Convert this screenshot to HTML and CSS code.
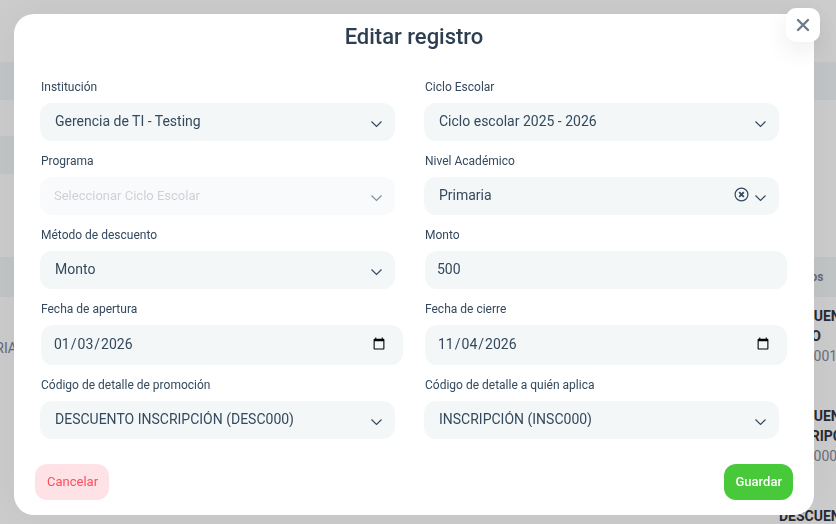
FILE: index.html
```html
<!doctype html>
<html lang="es">
<head>
    <meta charset="UTF-8">
    <meta name="viewport" content="width=device-width, initial-scale=1.0">
    <title>Editar registro</title>
    <link rel="stylesheet" href="styles.css">
</head>
<body>
    <main class="page" aria-hidden="true">
        <div class="filter filter-wide"></div>
        <div class="filter filter-short"></div>
        <div class="list">
            <div class="list-head">
                <span></span>
                <span class="list-title">Códigos</span>
            </div>
            <div class="list-row">
                <span class="level">PRIMARIA</span>
                <div class="code"><b>DESCUENTO</b><b>ÚNICO</b><span>DESC001</span></div>
            </div>
            <div class="list-row">
                <span></span>
                <div class="code"><b>DESCUENTO</b><b>INSCRIPCIÓN</b><span>DESC000</span></div>
            </div>
            <div class="list-row">
                <span></span>
                <div class="code"><b>DESCUENTO</b></div>
            </div>
        </div>
    </main>

    <div class="overlay">
        <div class="modal" role="dialog" aria-modal="true" aria-labelledby="modalTitle">
            <button type="button" class="close" aria-label="Cerrar">
                <svg width="14" height="14" viewBox="0 0 14 14"><path d="M2 2l10 10M12 2L2 12"/></svg>
            </button>
            <h1 id="modalTitle">Editar registro</h1>
            <form id="editForm">
                <div class="fields">
                    <div class="field">
                        <label for="institucion">Institución</label>
                        <div class="select">
                            <select id="institucion"><option>Gerencia de TI - Testing</option></select>
                            <svg class="arrow" width="12" height="8" viewBox="0 0 12 8"><path d="M.5 1.5l5 5 5-5"/></svg>
                        </div>
                    </div>
                    <div class="field">
                        <label for="ciclo">Ciclo Escolar</label>
                        <div class="select">
                            <select id="ciclo"><option>Ciclo escolar 2025 - 2026</option></select>
                            <svg class="arrow" width="12" height="8" viewBox="0 0 12 8"><path d="M.5 1.5l5 5 5-5"/></svg>
                        </div>
                    </div>
                    <div class="field">
                        <label for="programa">Programa</label>
                        <div class="select disabled">
                            <select id="programa" disabled><option>Seleccionar Ciclo Escolar</option></select>
                            <svg class="arrow" width="12" height="8" viewBox="0 0 12 8"><path d="M.5 1.5l5 5 5-5"/></svg>
                        </div>
                    </div>
                    <div class="field">
                        <label for="nivel">Nivel Académico</label>
                        <div class="select">
                            <select id="nivel"><option>Primaria</option></select>
                            <button type="button" class="clear" aria-label="Limpiar">
                                <svg width="16" height="16" viewBox="0 0 16 16"><circle cx="8.5" cy="7.5" r="6.4"/><path d="M6.2 5.2l4.6 4.6M10.8 5.2l-4.6 4.6"/></svg>
                            </button>
                            <svg class="arrow" width="12" height="8" viewBox="0 0 12 8"><path d="M.5 1.5l5 5 5-5"/></svg>
                        </div>
                    </div>
                    <div class="field">
                        <label for="metodo">Método de descuento</label>
                        <div class="select">
                            <select id="metodo"><option>Monto</option></select>
                            <svg class="arrow" width="12" height="8" viewBox="0 0 12 8"><path d="M.5 1.5l5 5 5-5"/></svg>
                        </div>
                    </div>
                    <div class="field">
                        <label for="monto">Monto</label>
                        <input type="text" id="monto" inputmode="numeric" value="500">
                    </div>
                    <div class="field">
                        <label for="apertura">Fecha de apertura</label>
                        <input type="date" id="apertura" value="2026-01-03">
                    </div>
                    <div class="field">
                        <label for="cierre">Fecha de cierre</label>
                        <input type="date" id="cierre" value="2026-11-04">
                    </div>
                    <div class="field">
                        <label for="promocion">Código de detalle de promoción</label>
                        <div class="select">
                            <select id="promocion"><option>DESCUENTO INSCRIPCIÓN (DESC000)</option></select>
                            <svg class="arrow" width="12" height="8" viewBox="0 0 12 8"><path d="M.5 1.5l5 5 5-5"/></svg>
                        </div>
                    </div>
                    <div class="field">
                        <label for="aplica">Código de detalle a quién aplica</label>
                        <div class="select">
                            <select id="aplica"><option>INSCRIPCIÓN (INSC000)</option></select>
                            <svg class="arrow" width="12" height="8" viewBox="0 0 12 8"><path d="M.5 1.5l5 5 5-5"/></svg>
                        </div>
                    </div>
                </div>
                <div class="actions">
                    <button type="button" class="btn cancel">Cancelar</button>
                    <button type="submit" class="btn save">Guardar</button>
                </div>
            </form>
        </div>
    </div>
</body>
</html>
```

FILE: styles.css
```css
* {
    box-sizing: border-box;
}

body {
    margin: 0;
    height: 100vh;
    overflow: hidden;
    font-family: Roboto, sans-serif;
    font-size: 14px;
    color: #34495e;
    background: #fff;
}

/* page behind the dialog */
.page {
    height: 100vh;
    overflow: hidden;
    padding-top: 62px;
    line-height: 20px;
}

.filter {
    height: 38px;
    background: #f3f6f9;
}

.filter-wide {
    margin-bottom: 36px;
}

.filter-short {
    width: 50%;
    background: #f2f7f8;
}

.list {
    margin-top: 83px;
}

.list-head,
.list-row {
    display: grid;
    grid-template-columns: 1fr 57px;
}

.list-head {
    height: 40px;
    align-items: center;
    background: #f2f7f8;
    margin-bottom: 9px;
}

.list-title {
    font-size: 12px;
    font-weight: 700;
    color: #7e8299;
}

.list-row {
    height: 100px;
}

.level {
    width: 17px;
    margin-top: 32px;
    color: #7e8299;
    direction: rtl;
    white-space: nowrap;
}

.code b,
.code span {
    display: block;
    white-space: nowrap;
}

.code b {
    color: #32343f;
}

.code span {
    color: #868a9e;
}

/* dialog */
.overlay {
    position: fixed;
    inset: 0;
    padding: 14px 22px 9px 14px;
    background: rgba(0, 0, 0, 0.2);
}

.modal {
    position: relative;
    max-width: 800px;
    margin: 0 auto;
    padding: 9px 0 15px;
    background: #fff;
    border-radius: 20px;
    box-shadow: 0 0 50px rgba(0, 0, 0, 0.06);
}

.close {
    position: absolute;
    top: -6px;
    right: -6px;
    width: 34px;
    height: 34px;
    padding: 0;
    display: flex;
    align-items: center;
    justify-content: center;
    border: none;
    border-radius: 10px;
    background: #fff;
    box-shadow: 0 8px 24px rgba(0, 0, 0, 0.08);
    cursor: pointer;
}

.close svg {
    stroke: #6c7a89;
    stroke-width: 2.4;
    stroke-linecap: round;
}

h1 {
    margin: 0 0 27px;
    font-size: 22px;
    line-height: 28px;
    font-weight: 500;
    text-align: center;
    color: #2c3e50;
}

.fields {
    display: grid;
    grid-template-columns: 1fr 1fr;
    gap: 11px 22px;
    padding: 0 27px;
}

label {
    display: block;
    margin-bottom: 7px;
    font-size: 12px;
    line-height: 18px;
}

.select {
    position: relative;
    margin: 0 8px 0 -1px;
}

select,
input {
    display: block;
    width: 100%;
    height: 38px;
    border: none;
    border-radius: 12px;
    outline: none;
    background: #f3f7f8;
    color: #34495e;
    font-family: inherit;
    font-size: 14px;
}

select {
    appearance: none;
    padding: 0 60px 2px 15px;
}

input {
    padding: 0 12px 2px;
}

input[type="date"] {
    height: 40px;
    padding: 0 15px 2px 12px;
}

.arrow {
    position: absolute;
    top: 17px;
    right: 12px;
    pointer-events: none;
}

svg {
    fill: none;
    stroke: #34495e;
    stroke-width: 1.2;
}

.clear {
    position: absolute;
    top: 10px;
    right: 30px;
    width: 16px;
    height: 16px;
    padding: 0;
    border: none;
    background: none;
    cursor: pointer;
}

.clear svg {
    display: block;
}

.clear path {
    stroke-width: 1.8;
}

.disabled select {
    padding-left: 14px;
    background: #f9fafc;
    color: #ced2d7;
    opacity: 1;
    font-size: 13px;
}

.disabled .arrow {
    opacity: 0.6;
}

.actions {
    display: flex;
    justify-content: space-between;
    margin-top: 25px;
    padding: 0 21px;
}

.btn {
    height: 36px;
    padding: 0 11px 2px 12px;
    border: none;
    border-radius: 12px;
    font-family: inherit;
    font-size: 13px;
    cursor: pointer;
}

.cancel {
    background: #ffe2e5;
    color: #ff4d5e;
}

.save {
    background: #47c93a;
    color: #fff;
    font-weight: 500;
}
```
